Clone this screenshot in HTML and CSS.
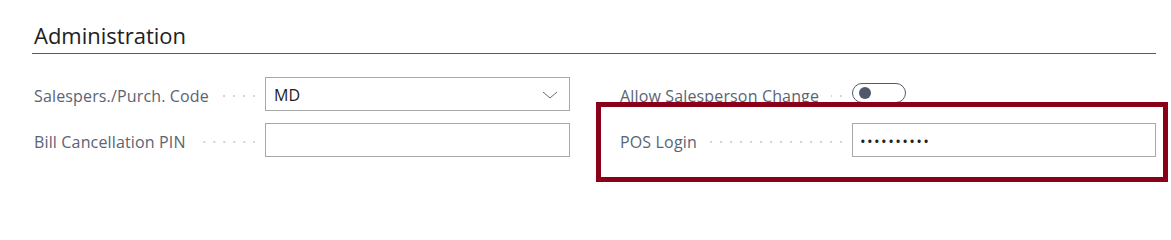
FILE: index.html
```html
<!DOCTYPE html>
<html lang="en">
<head>
<meta charset="utf-8">
<title>Administration</title>
<link rel="stylesheet" href="styles.css">
</head>
<body>
<div class="page">
  <h2 class="title">Administration</h2>
  <div class="grid">
    <div class="col">
      <div class="row">
        <div class="caption"><span class="label">Salespers./Purch. Code</span><span class="leader"></span></div>
        <div class="field select"><span class="value">MD</span>
          <svg class="chev" width="16" height="8" viewBox="0 0 16 8"><path d="M1 1 L8 7 L15 1" fill="none" stroke="#6b6b6b" stroke-width="1"/></svg>
        </div>
      </div>
      <div class="row">
        <div class="caption"><span class="label">Bill Cancellation PIN</span><span class="leader"></span></div>
        <div class="field"></div>
      </div>
    </div>
    <div class="col">
      <div class="row">
        <div class="caption"><span class="label">Allow Salesperson Change</span><span class="leader"></span></div>
        <div class="toggle-cell"><span class="toggle"><span class="knob"></span></span></div>
      </div>
      <div class="row">
        <div class="caption"><span class="label">POS Login</span><span class="leader"></span></div>
        <div class="field"><span class="value pw">••••••••••</span></div>
      </div>
    </div>
  </div>
  <div class="highlight"></div>
</div>
</body>
</html>
```
FILE: styles.css
```css
html, body {
  margin: 0;
  padding: 0;
  background: #ffffff;
  min-height: 200px;
}
body {
  font-family: "Open Sans", "Noto Sans", sans-serif;
  color: #212121;
}
.page {
  position: relative;
  width: 1124px;
  min-height: 178px;
  padding: 22px 0 0 32px;
}
.title {
  margin: 0;
  padding: 0 0 5px 2px;
  font-size: 22px;
  line-height: 26px;
  font-weight: 400;
  color: #212121;
  border-bottom: 1px solid #505c6d;
}
.grid {
  display: grid;
  grid-template-columns: 536px 536px;
  column-gap: 50px;
  margin-top: 23px;
  padding-left: 2px;
}
.col {
  display: flex;
  flex-direction: column;
  gap: 12px;
}
.row {
  display: grid;
  grid-template-columns: 231px 1fr;
  height: 34px;
  align-items: center;
}
.col + .col .row {
  grid-template-columns: 232px 1fr;
}
.caption {
  display: flex;
  align-items: center;
  min-width: 0;
}
.label {
  font-size: 16px;
  letter-spacing: 0.15px;
  color: #5a6473;
  white-space: nowrap;
  padding-top: 4px;
}
.leader {
  flex: 1;
  height: 2px;
  margin: 3px 10px 0 12px;
  background-image: linear-gradient(to right, transparent 8px, #d2d2d2 8px);
  background-size: 10px 2px;
  background-repeat: repeat-x;
  background-position: right center;
}
.field {
  box-sizing: border-box;
  height: 34px;
  border: 1px solid #a8a8a8;
  background: #fff;
  display: flex;
  align-items: center;
  padding: 1px 8px 0;
}
.value {
  font-size: 16px;
  color: #212121;
}
.pw {
  font-size: 15px;
  letter-spacing: 1.4px;
  margin-left: -1px;
}
.select {
  justify-content: space-between;
  padding-right: 11px;
}
.chev {
  display: block;
}
.toggle-cell {
  display: flex;
  align-items: center;
}
.toggle {
  box-sizing: border-box;
  width: 54px;
  height: 20px;
  border: 1px solid #505c6d;
  border-radius: 10px;
  display: flex;
  align-items: center;
  padding-left: 6px;
  margin-top: -2px;
}
.knob {
  width: 12px;
  height: 12px;
  border-radius: 50%;
  background: #4f596b;
}
.highlight {
  position: absolute;
  left: 596px;
  top: 102px;
  width: 572px;
  height: 80px;
  box-sizing: border-box;
  border: 5px solid #8a0019;
}
```
